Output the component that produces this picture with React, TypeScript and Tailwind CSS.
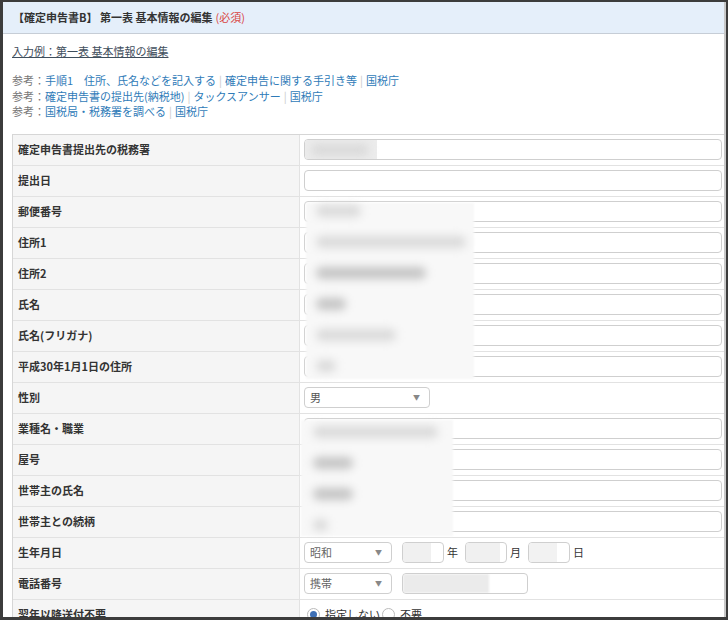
import React from "react";

const font = { fontFamily: '"Noto Sans CJK JP", "Noto Sans", sans-serif' };

function Blob({ w, dark = false }: { w: number; dark?: boolean }) {
  return (
    <span
      className={`inline-block h-[12px] rounded-full blur-[4px] ${dark ? "bg-[#c4c4c4]" : "bg-[#dadada]"}`}
      style={{ width: w }}
    />
  );
}

function TextInput({ children, className = "" }: { children?: React.ReactNode; className?: string }) {
  return (
    <div className={`h-[21px] rounded-[4px] border border-[#cfcfcf] bg-white flex items-center overflow-hidden ${className}`}>
      {children}
    </div>
  );
}

function Select({ value, className = "" }: { value: string; className?: string }) {
  return (
    <div className={`h-[21px] rounded-[4px] border border-[#cfcfcf] bg-white flex items-center justify-between pl-[5px] pr-[9px] text-[11px] text-[#555] ${className}`}>
      <span>{value}</span>
      <span className="text-[7px] text-[#888]">▼</span>
    </div>
  );
}

function Row({ label, children }: { label: string; children?: React.ReactNode }) {
  return (
    <div className="flex h-[31px] border-b border-[#e2e2e2]">
      <div className="w-[287px] shrink-0 bg-[#f5f5f5] border-r border-[#e2e2e2] flex items-center pl-[5px] text-[11px] font-bold text-[#333]">
        {label}
      </div>
      <div className="flex-1 flex items-center pl-[4px] pr-[2px]">{children}</div>
    </div>
  );
}

function Sep() {
  return <span className="text-[#c9c9c9] mx-[3px]">|</span>;
}

export default function App() {
  return (
    <div style={font} className="w-[728px] h-[620px] bg-[#3c3c3c] pt-[2px] pl-[3px] pr-[2px] pb-[3px] overflow-hidden">
      <div className="h-full bg-white border-r-[2px] border-[#c8c8c8] overflow-hidden flex flex-col">
        <div className="h-[32px] shrink-0 bg-[#e5effa] border-b border-[#c6cdd6] flex items-center pl-[10px] text-[11px] font-bold text-[#333]">
          <span>【確定申告書B】 第一表 基本情報の編集</span>
          <span className="text-[#d9443f] font-normal ml-[3px]">(必須)</span>
        </div>
        <div className="pl-[9px] text-[11px]">
          <div className="pt-[9px] leading-[16px]">
            <span className="text-[#3f4e5c] underline">入力例：第一表 基本情報の編集</span>
          </div>
          <div className="mt-[14px] leading-[15.5px] text-[#777]">
            <div>
              参考：<span className="text-[#2f7bb8]">手順1　住所、氏名などを記入する</span>
              <Sep />
              <span className="text-[#2f7bb8]">確定申告に関する手引き等</span>
              <Sep />
              <span className="text-[#2f7bb8]">国税庁</span>
            </div>
            <div>
              参考：<span className="text-[#2f7bb8]">確定申告書の提出先(納税地)</span>
              <Sep />
              <span className="text-[#2f7bb8]">タックスアンサー</span>
              <Sep />
              <span className="text-[#2f7bb8]">国税庁</span>
            </div>
            <div>
              参考：<span className="text-[#2f7bb8]">国税局・税務署を調べる</span>
              <Sep />
              <span className="text-[#2f7bb8]">国税庁</span>
            </div>
          </div>
          <div className="relative mt-[14px] border-t border-l border-[#d6d6d6]">
            <Row label="確定申告書提出先の税務署">
              <TextInput className="flex-1">
                <span className="h-full w-[72px] bg-[#ececec] flex items-center pl-[6px]">
                  <Blob w={58} />
                </span>
              </TextInput>
            </Row>
            <Row label="提出日">
              <TextInput className="flex-1" />
            </Row>
            <Row label="郵便番号">
              <TextInput className="flex-1" />
            </Row>
            <Row label="住所1">
              <TextInput className="flex-1" />
            </Row>
            <Row label="住所2">
              <TextInput className="flex-1" />
            </Row>
            <Row label="氏名">
              <TextInput className="flex-1" />
            </Row>
            <Row label="氏名(フリガナ)">
              <TextInput className="flex-1" />
            </Row>
            <Row label="平成30年1月1日の住所">
              <TextInput className="flex-1" />
            </Row>
            <Row label="性別">
              <Select value="男" className="w-[126px]" />
            </Row>
            <Row label="業種名・職業">
              <TextInput className="flex-1" />
            </Row>
            <Row label="屋号">
              <TextInput className="flex-1" />
            </Row>
            <Row label="世帯主の氏名">
              <TextInput className="flex-1" />
            </Row>
            <Row label="世帯主との続柄">
              <TextInput className="flex-1" />
            </Row>
            <Row label="生年月日">
              <div className="flex items-center text-[11px] text-[#333]">
                <Select value="昭和" className="w-[88px] text-[#666]" />
                <TextInput className="w-[42px] ml-[10px]">
                  <span className="h-full w-[28px] bg-[#f0f0f0]" />
                </TextInput>
                <span className="ml-[3px]">年</span>
                <TextInput className="w-[42px] ml-[7px]">
                  <span className="h-full w-[34px] bg-[#f0f0f0]" />
                </TextInput>
                <span className="ml-[3px]">月</span>
                <TextInput className="w-[42px] ml-[7px]">
                  <span className="h-full w-[28px] bg-[#f2f2f2]" />
                </TextInput>
                <span className="ml-[3px]">日</span>
              </div>
            </Row>
            <Row label="電話番号">
              <div className="flex items-center">
                <Select value="携帯" className="w-[88px] text-[#666]" />
                <TextInput className="w-[126px] ml-[10px]">
                  <span className="h-full w-[86px] bg-[#ebebeb] blur-[1px]" />
                </TextInput>
              </div>
            </Row>
            <Row label="翌年以降送付不要">
              <div className="flex items-center text-[11px] text-[#333] pl-[3px]">
                <span className="w-[13px] h-[13px] rounded-full border border-[#bbb] bg-white flex items-center justify-center">
                  <span className="w-[7px] h-[7px] rounded-full bg-[#3d6fb5]" />
                </span>
                <span className="ml-[5px]">指定しない</span>
                <span className="ml-[2px] w-[13px] h-[13px] rounded-full border border-[#bbb] bg-white" />
                <span className="ml-[5px]">不要</span>
              </div>
            </Row>

            {/* blurred overlays */}
            <div className="absolute left-[293px] top-[68px] w-[168px] h-[176px] bg-[#f8f8f8] blur-[1px] flex flex-col pl-[10px] pt-[2px] gap-[19px]">
              <Blob w={45} />
              <Blob w={150} />
              <Blob w={110} dark />
              <Blob w={30} dark />
              <Blob w={80} />
              <Blob w={20} />
            </div>
            <div className="absolute left-[288px] top-[285px] w-[152px] h-[116px] bg-[#f8f8f8] blur-[1px] flex flex-col pl-[12px] pt-[6px] gap-[19px]">
              <Blob w={125} />
              <Blob w={40} dark />
              <Blob w={40} dark />
              <Blob w={15} />
            </div>
          </div>
        </div>
      </div>
    </div>
  );
}
